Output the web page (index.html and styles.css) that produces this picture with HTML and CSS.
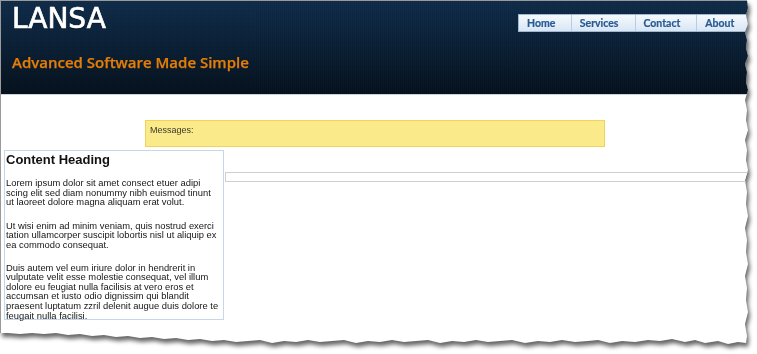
FILE: index.html
```html
<!DOCTYPE html>
<html>
<head>
<meta charset="utf-8">
<title>LANSA</title>
<link rel="stylesheet" href="styles.css">
</head>
<body>
<div class="sheet">
  <div class="paper">
    <header class="masthead">
      <div class="brand">
        <div class="logo">LANSA</div>
        <div class="tagline">Advanced Software Made Simple</div>
      </div>
      <nav class="nav">
        <a class="nav-item nav-home">Home</a>
        <a class="nav-item nav-services">Services</a>
        <a class="nav-item nav-contact">Contact</a>
        <a class="nav-item nav-about">About</a>
      </nav>
    </header>
    <main class="main">
      <div class="messages">Messages:</div>
      <div class="row">
        <section class="content">
          <h2 class="content-heading">Content Heading</h2>
          <p>Lorem ipsum dolor sit amet consect etuer adipi<br>scing elit sed diam nonummy nibh euismod tinunt<br>ut laoreet dolore magna aliquam erat volut.</p>
          <p>Ut wisi enim ad minim veniam, quis nostrud exerci<br>tation ullamcorper suscipit lobortis nisl ut aliquip ex<br>ea commodo consequat.</p>
          <p class="last">Duis autem vel eum iriure dolor in hendrerit in<br>vulputate velit esse molestie consequat, vel illum<br>dolore eu feugiat nulla facilisis at vero eros et<br>accumsan et iusto odio dignissim qui blandit<br>praesent luptatum zzril delenit augue duis dolore te<br>feugait nulla facilisi.</p>
        </section>
        <div class="bar"></div>
      </div>
    </main>
  </div>
</div>
</body>
</html>
```
FILE: styles.css
```css
html, body {
  margin: 0;
  padding: 0;
  background: #ffffff;
}
body {
  width: 757px;
  height: 354px;
  overflow: hidden;
  font-family: "Liberation Sans", Arial, sans-serif;
}
.sheet {
  width: 757px;
  height: 354px;
  filter: drop-shadow(2px 4px 2px rgba(0, 0, 0, 0.6));
}
.paper {
  width: 750px;
  height: 346px;
  box-sizing: border-box;
  background: #ffffff;
  border-left: 1px solid #9a9a9a;
  border-top: 1px solid #9a9a9a;
  clip-path: polygon(
    747px 0, 748px 8px, 746px 15px, 748px 24px, 745px 32px, 747px 40px, 746px 48px, 748px 56px, 745px 64px, 747px 72px,
    746px 82px, 748px 90px, 745px 100px, 747px 110px, 746px 120px, 748px 130px, 745px 140px, 747px 150px, 746px 160px,
    748px 170px, 745px 180px, 747px 192px, 746px 204px, 748px 216px, 745px 228px, 747px 240px, 746px 252px, 748px 264px,
    745px 276px, 747px 288px, 746px 300px, 748px 312px, 745px 324px, 747px 336px, 746px 343px,
    738px 342px, 728px 344px, 718px 341px, 705px 343px, 695px 340px, 685px 342px, 672px 339px, 660px 341px, 648px 340px,
    635px 342px, 622px 341px, 610px 343px, 598px 340px, 588px 341px, 575px 342px, 562px 340px, 550px 342px, 538px 341px,
    525px 343px, 512px 340px, 500px 341px, 488px 342px, 476px 340px, 464px 342px, 452px 341px, 440px 343px, 428px 340px,
    416px 341px, 404px 342px, 392px 340px, 380px 342px, 368px 341px, 356px 343px, 344px 340px, 332px 341px, 320px 342px,
    308px 340px, 296px 342px, 284px 341px, 272px 343px, 260px 340px, 248px 341px, 236px 342px, 224px 340px, 212px 341px,
    200px 339px, 188px 340px, 176px 338px, 164px 339px, 152px 337px, 140px 338px, 128px 336px, 116px 337px, 104px 335px,
    92px 336px, 80px 334px, 68px 335px, 56px 333px, 44px 334px, 32px 333px, 20px 334px, 8px 333px, 0 333px, 0 0
  );
}
.masthead {
  height: 93px;
  display: flex;
  justify-content: space-between;
  align-items: flex-start;
  background:
    repeating-linear-gradient(90deg, rgba(255,255,255,0.012) 0 1px, transparent 1px 2px),
    repeating-linear-gradient(0deg, rgba(0,0,0,0.05) 0 1px, transparent 1px 2px),
    linear-gradient(180deg, #0f2c4a 0%, #0a1f35 50%, #05111c 100%);
  border-bottom: 1px solid #c9d3dc;
}
.brand {
  padding: 1px 0 0 11px;
}
.logo {
  font-family: "DejaVu Sans", Verdana, sans-serif;
  font-size: 28px;
  line-height: 34px;
  color: #ffffff;
  -webkit-text-stroke: 0.7px #ffffff;
  text-shadow: 0 1px 1px rgba(0, 0, 0, 0.6);
}
.tagline {
  margin-top: 16px;
  font-family: "Open Sans", sans-serif;
  font-weight: 600;
  font-size: 15px;
  line-height: 20px;
  color: #e57e08;
  -webkit-text-stroke: 0.25px #e57e08;
}
.nav {
  display: flex;
  margin-top: 13px;
  height: 18px;
  flex: none;
  width: 232px;
  box-sizing: border-box;
  border: 1px solid #9fb8d1;
  border-right: none;
  background: linear-gradient(180deg, #f5f9fd 0%, #e6eff8 55%, #d8e6f3 100%);
}
.nav-item {
  display: block;
  box-sizing: border-box;
  padding-left: 8px;
  font-family: Lato, "Liberation Sans", sans-serif;
  font-weight: 700;
  font-size: 10.5px;
  line-height: 16px;
  color: #285a93;
  -webkit-text-stroke: 0.2px #285a93;
  border-right: 1px solid #b9cde1;
}
.nav-home { width: 53px; }
.nav-services { width: 64px; }
.nav-contact { width: 62px; }
.nav-about { width: 53px; border-right: none; }
.main {
  padding: 25px 0 0 0;
}
.messages {
  margin-left: 144px;
  width: 460px;
  height: 27px;
  box-sizing: border-box;
  background: #fbea8a;
  border: 1px solid #f0d45a;
  padding: 3px 0 0 4px;
  font-size: 9px;
  line-height: 12px;
  color: #3a3a2a;
}
.row {
  display: flex;
  align-items: flex-start;
  margin-top: 3px;
  margin-left: 3px;
  gap: 1px;
}
.content {
  width: 220px;
  height: 170px;
  box-sizing: border-box;
  border: 1px solid #c4d8ea;
  padding: 0 1px 0 1px;
  color: #151515;
  flex: none;
}
.content-heading {
  margin: 0;
  font-size: 13px;
  line-height: 15px;
  font-weight: 700;
  padding-top: 1px;
  color: #111111;
}
.content p {
  margin: 11px 0 0 0;
  font-size: 9.4px;
  line-height: 9.6px;
  white-space: nowrap;
}
.content p + p {
  margin-top: 14px;
}
.content p.last {
  margin-top: 13px;
}
.bar {
  margin-top: 22px;
  flex: 1;
  height: 10px;
  box-sizing: border-box;
  border: 1px solid #cfcfcf;
  background: #ffffff;
}
```
